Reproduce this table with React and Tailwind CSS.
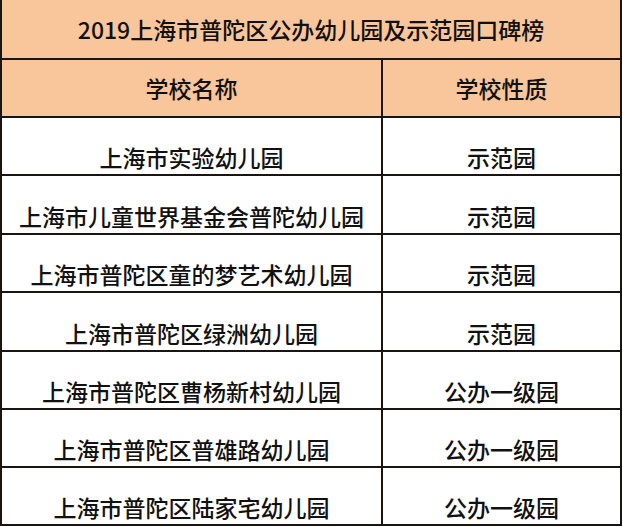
import React from "react";

const rows = [
  { name: "上海市实验幼儿园", type: "示范园", h: "h-[58px]" },
  { name: "上海市儿童世界基金会普陀幼儿园", type: "示范园", h: "h-[59px]" },
  { name: "上海市普陀区童的梦艺术幼儿园", type: "示范园", h: "h-[58px]" },
  { name: "上海市普陀区绿洲幼儿园", type: "示范园", h: "h-[59px]" },
  { name: "上海市普陀区曹杨新村幼儿园", type: "公办一级园", h: "h-[58px]" },
  { name: "上海市普陀区普雄路幼儿园", type: "公办一级园", h: "h-[58px]" },
  { name: "上海市普陀区陆家宅幼儿园", type: "公办一级园", h: "h-[58px]" },
];

const font = "font-['Microsoft_YaHei','Noto_Sans_CJK_SC',sans-serif]";

export default function App() {
  return (
    <div className="w-[623px] h-[527px] bg-white">
      <div
        className={`w-[622px] border-x-2 border-[#1b1512] text-[23px] leading-[23px] font-medium text-[#111] ${font}`}
      >
        {/* title */}
        <div className="h-[60px] bg-[#f9c59b] border-b-2 border-[#1b1512] flex items-center justify-center">
          2019上海市普陀区公办幼儿园及示范园口碑榜
        </div>

        {/* column headers */}
        <div className="h-[58px] grid grid-cols-[381px_1fr] bg-[#f9c59b] border-b-2 border-[#1b1512]">
          <div className="flex items-center justify-center border-r-2 border-[#1b1512]">
            学校名称
          </div>
          <div className="flex items-center justify-center">学校性质</div>
        </div>

        {rows.map((r) => (
          <div
            key={r.name}
            className={`${r.h} grid grid-cols-[381px_1fr] border-b-2 border-[#1b1512]`}
          >
            <div className="flex items-end justify-center pb-[5px] border-r-2 border-[#1b1512]">
              {r.name}
            </div>
            <div className="flex items-end justify-center pb-[5px]">
              {r.type}
            </div>
          </div>
        ))}
      </div>
    </div>
  );
}
